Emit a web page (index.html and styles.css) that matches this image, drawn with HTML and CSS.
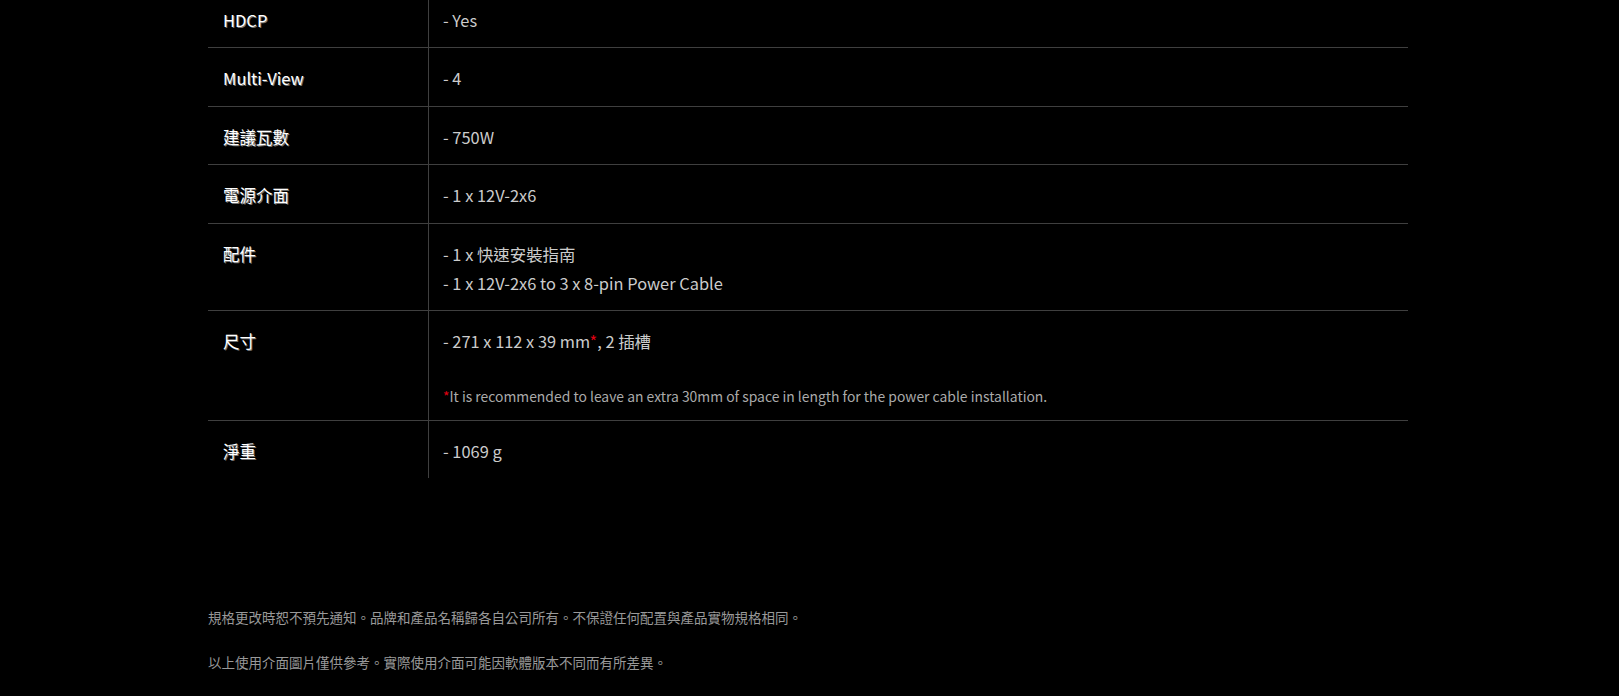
FILE: index.html
```html
<!DOCTYPE html>
<html lang="zh-Hant">
<head>
<meta charset="utf-8">
<link rel="stylesheet" href="styles.css">
</head>
<body>
<div class="page">
  <div class="spec">
    <div class="row">
      <div class="label">HDCP</div>
      <div class="value"><p>- Yes</p></div>
    </div>
    <div class="row">
      <div class="label">Multi-View</div>
      <div class="value"><p>- 4</p></div>
    </div>
    <div class="row">
      <div class="label">建議瓦數</div>
      <div class="value"><p>- 750W</p></div>
    </div>
    <div class="row">
      <div class="label">電源介面</div>
      <div class="value"><p>- 1 x 12V-2x6</p></div>
    </div>
    <div class="row">
      <div class="label">配件</div>
      <div class="value"><p>- 1 x 快速安裝指南</p><p>- 1 x 12V-2x6 to 3 x 8-pin Power Cable</p></div>
    </div>
    <div class="row">
      <div class="label">尺寸</div>
      <div class="value"><p>- 271 x 112 x 39 mm<span class="star">*</span>, 2 插槽</p><p class="note"><span class="star">*</span>It is recommended to leave an extra 30mm of space in length for the power cable installation.</p></div>
    </div>
    <div class="row last">
      <div class="label">淨重</div>
      <div class="value"><p>- 1069 g</p></div>
    </div>
  </div>
  <div class="footer">
    <p>規格更改時恕不預先通知。品牌和產品名稱歸各自公司所有。不保證任何配置與產品實物規格相同。</p>
    <p>以上使用介面圖片僅供參考。實際使用介面可能因軟體版本不同而有所差異。</p>
  </div>
</div>
</body>
</html>
```
FILE: styles.css
```css
html, body {
  margin: 0;
  padding: 0;
  background: #000;
}
body {
  font-family: "Noto Sans CJK TC", "Noto Sans", sans-serif;
  color: #ccc;
  overflow: hidden;
}
.page {
  width: 1200px;
  margin: -10px 0 0 208px;
}
.spec {
  display: flex;
  flex-direction: column;
}
.row {
  display: grid;
  grid-template-columns: 221px 1fr;
  border-bottom: 1px solid #3f3f3f;
}
.row.last {
  border-bottom: none;
}
.label {
  border-right: 1px solid #3f3f3f;
  padding: 16px 14px 12px 15px;
  font-size: 16.5px;
  font-weight: 400;
  line-height: 29.4px;
  color: #fff;
  text-shadow: 1px 1px 0 #707070;
}
.value {
  padding: 16px 14px 12px 14px;
  font-size: 16.4px;
  line-height: 29.4px;
  color: #ccc;
}
.value p {
  margin: 0;
}
.value p.note {
  margin-top: 29px;
  margin-bottom: 2px;
  font-size: 13.9px;
  line-height: 20px;
  color: #aaa;
}
.star {
  color: #e00012;
}
.footer {
  margin-top: 129px;
  font-size: 13.5px;
  color: #999;
}
.footer p {
  margin: 0 0 25px 0;
  line-height: 20px;
}
```
